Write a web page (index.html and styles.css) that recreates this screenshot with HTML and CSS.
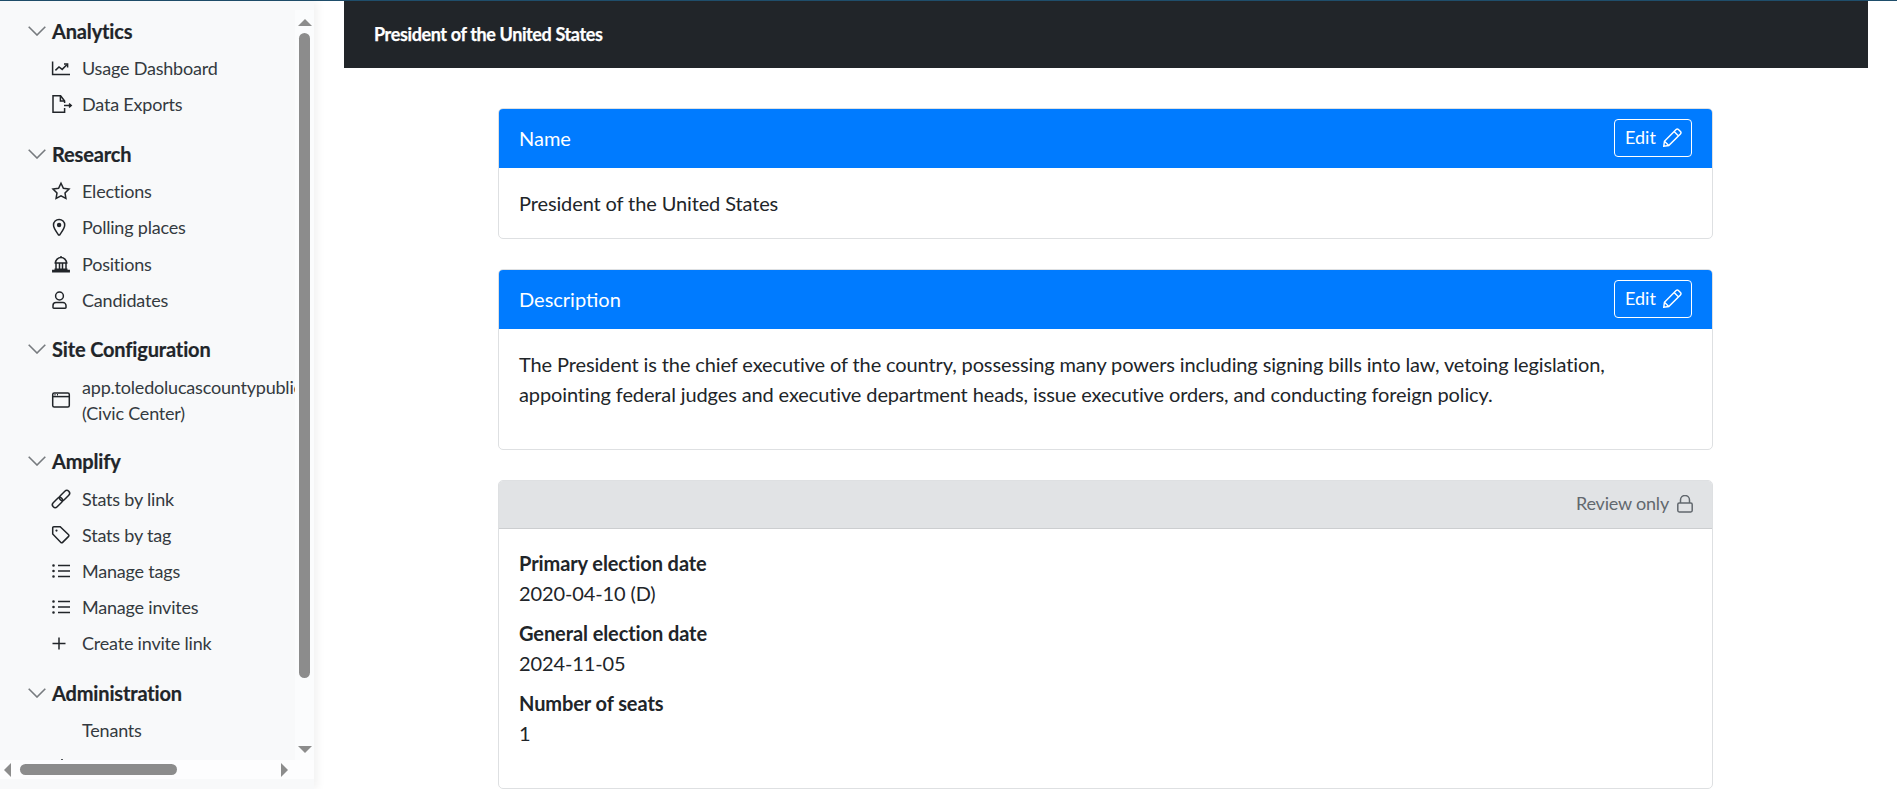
FILE: index.html
```
<!DOCTYPE html>
<html lang="en">
<head>
<meta charset="utf-8">
<title>President of the United States</title>
<link rel="stylesheet" href="styles.css">
</head>
<body>
<div class="app">
  <aside class="sidebar">
    <nav class="nav">
      <section class="group">
        <h2 class="group-title"><svg class="chev" viewBox="0 0 18 10"><path d="M.7.7 9 9l8.3-8.3"/></svg>Analytics</h2>
        <a class="item"><svg class="ico" viewBox="0 0 18 18"><path d="M.6 2.600v12.800H18"/><path d="M3.400 11.400 7 8l3.200 2.400 4.600-4.600"/><path d="M12 5h3.600v3.400"/></svg><span>Usage Dashboard</span></a>
        <a class="item"><svg class="ico ico-wide" viewBox="0 0 20 18"><path d="M12.600 8V6L8.600.7H1v16.600h11.600V13"/><path d="M8.400.9V6h4.200"/><path d="M12 10.500h7"/><path d="m17 8.600 2.200 1.900-2.200 1.900"/></svg><span>Data Exports</span></a>
      </section>
      <section class="group">
        <h2 class="group-title"><svg class="chev" viewBox="0 0 18 10"><path d="M.7.7 9 9l8.3-8.3"/></svg>Research</h2>
        <a class="item"><svg class="ico" viewBox="0 0 18 18"><path d="m9 1.200 2.400 5 5.600.8-4 3.900.9 5.500L9 13.800l-4.900 2.600.9-5.500L1 7l5.600-.8z"/></svg><span>Elections</span></a>
        <a class="item"><svg class="ico" viewBox="0 0 18 18"><path d="M7.600 17C5 13.200 2.500 10.200 2.500 7a5.600 5.600 0 0 1 11.200 0c0 3.200-2.500 6.200-5.100 10z" transform="translate(-1 0)"/><circle cx="7.100" cy="7" r="2.200" class="solid"/></svg><span>Polling places</span></a>
        <a class="item"><svg class="ico" viewBox="0 0 18 18"><path d="M9 1v1.500M3.500 8A5.500 5.500 0 0 1 14.500 8zM2.500 8h13M4 8.500v5.500M7.500 8.500v5.500M10.500 8.500v5.500M14 8.500v5.500M2.500 14.200h13M.8 16.800h16.400v-1.200H.8z"/></svg><span>Positions</span></a>
        <a class="item"><svg class="ico" viewBox="0 0 18 18"><circle cx="7.500" cy="5" r="3.900"/><path d="M1 16.400v-1.800a3 3 0 0 1 3-3h7a3 3 0 0 1 3 3v1.800a.8.8 0 0 1-.8.8H1.800a.8.8 0 0 1-.8-.8z"/></svg><span>Candidates</span></a>
      </section>
      <section class="group">
        <h2 class="group-title"><svg class="chev" viewBox="0 0 18 10"><path d="M.7.7 9 9l8.3-8.3"/></svg>Site Configuration</h2>
        <a class="item item-double"><svg class="ico" viewBox="0 0 18 18"><rect x=".7" y="2" width="16.600" height="14" rx="1.500"/><path d="M.7 5.600h16.600"/><path d="M2.500 3.800h1M5 3.800h1"/></svg><span>app.toledolucascountypubliclibrary.org<br>(Civic Center)</span></a>
      </section>
      <section class="group">
        <h2 class="group-title"><svg class="chev" viewBox="0 0 18 10"><path d="M.7.7 9 9l8.300-8.300"/></svg>Amplify</h2>
        <a class="item"><svg class="ico" viewBox="0 0 18 18"><g transform="rotate(-45 9 9)"><rect x="-2" y="6.200" width="12" height="5.600" rx="2.800"/><rect x="8" y="6.200" width="12" height="5.600" rx="2.800"/></g></svg><span>Stats by link</span></a>
        <a class="item"><svg class="ico" viewBox="0 0 18 18"><path d="M.7 1.900v6l8.200 8.500a1.200 1.200 0 0 0 1.700 0l6-6a1.200 1.200 0 0 0 0-1.700L8.200.8H1.800A1.100 1.100 0 0 0 .7 1.900z"/><circle cx="4.500" cy="4.600" r="1.100" class="solid"/></svg><span>Stats by tag</span></a>
        <a class="item"><svg class="ico" viewBox="0 0 18 18"><path d="M6 3.500h12M6 9h12M6 14.500h12"/><path class="dots" d="M1.500 3.500h.01M1.500 9h.01M1.500 14.500h.01"/></svg><span>Manage tags</span></a>
        <a class="item"><svg class="ico" viewBox="0 0 18 18"><path d="M6 3.500h12M6 9h12M6 14.500h12"/><path class="dots" d="M1.500 3.500h.01M1.500 9h.01M1.500 14.500h.01"/></svg><span>Manage invites</span></a>
        <a class="item"><svg class="ico" viewBox="0 0 18 18"><path d="M7 3.500v12M.5 9.500h13"/></svg><span>Create invite link</span></a>
      </section>
      <section class="group">
        <h2 class="group-title"><svg class="chev" viewBox="0 0 18 10"><path d="M.7.7 9 9l8.300-8.300"/></svg>Administration</h2>
        <a class="item"><i class="ico"></i><span>Tenants</span></a>
        <a class="item"><svg class="ico" viewBox="0 0 18 18"><path d="M10 2v2"/></svg></a>
      </section>
    </nav>
    <div class="vbar"><i class="arrow arrow-up"></i><i class="vthumb"></i><i class="arrow arrow-down"></i></div>
    <div class="hbar"><i class="arrow arrow-left"></i><i class="hthumb"></i><i class="arrow arrow-right"></i></div>
  </aside>
  <main class="main">
    <header class="topbar">President of the United States</header>
    <div class="cards">
      <section class="card">
        <div class="card-head"><span>Name</span><button class="edit" type="button">Edit<svg class="pencil" viewBox="0 0 18 18"><path d="M1.300 12.800 11.800 2.300a1.500 1.500 0 0 1 2.100 0l1.800 1.800a1.500 1.500 0 0 1 0 2.100L5.200 16.700l-4.500.6zM10 4l4 4M1.300 12.800l3.900 3.900"/></svg></button></div>
        <div class="card-body"><p>President of the United States</p></div>
      </section>
      <section class="card">
        <div class="card-head"><span>Description</span><button class="edit" type="button">Edit<svg class="pencil" viewBox="0 0 18 18"><path d="M1.300 12.800 11.800 2.300a1.500 1.500 0 0 1 2.100 0l1.800 1.800a1.500 1.500 0 0 1 0 2.100L5.200 16.700l-4.500.6zM10 4l4 4M1.300 12.800l3.900 3.900"/></svg></button></div>
        <div class="card-body body-desc"><p>The President is the chief executive of the country, possessing many powers including signing bills into law, vetoing legislation, appointing federal judges and executive department heads, issue executive orders, and conducting foreign policy.</p></div>
      </section>
      <section class="card">
        <div class="card-head head-review"><span>Review only</span><svg class="lock" viewBox="0 0 16 18"><path d="M3.500 8V5a4.500 4.500 0 0 1 9 0v3"/><rect x=".8" y="8" width="14.400" height="9" rx="1.400"/></svg></div>
        <div class="card-body body-review">
          <div class="field"><strong>Primary election date</strong><span>2020-04-10 (D)</span></div>
          <div class="field"><strong>General election date</strong><span>2024-11-05</span></div>
          <div class="field"><strong>Number of seats</strong><span>1</span></div>
        </div>
      </section>
    </div>
  </main>
</div>
</body>
</html>
```
FILE: styles.css
```
* { box-sizing: border-box; }
html, body { margin: 0; height: 100%; overflow: hidden; }
body {
  font-family: Lato, "Liberation Sans", sans-serif;
  font-size: 20px;
  line-height: 30.6px;
  color: #212529;
  background: #fff;
}
.app {
  display: flex;
  height: 789px;
  border-top: 1px solid #1f4e6b;
}
.sidebar {
  flex: 0 0 314px;
  display: grid;
  grid-template-columns: 295px 19px;
  grid-template-rows: 750px 19px 1fr;
  padding-top: 9px;
  height: 788px;
  background: #f8f9fa;
  box-shadow: 4px 0 8px rgba(0, 0, 0, .05);
}
.nav { overflow: hidden; }
.group { padding-bottom: 10.7px; }
.group-title {
  display: flex;
  align-items: center;
  gap: 6px;
  height: 40px;
  margin: 0;
  padding: 1px 0 0 28px;
  font-size: 20px;
  font-weight: 700;
  line-height: 1;
  letter-spacing: -.15px;
  -webkit-text-stroke: .2px #212529;
}
.chev { width: 18px; height: 10px; fill: none; stroke: #777b7f; stroke-width: 1.6; }
.item {
  display: flex;
  align-items: center;
  gap: 12px;
  min-height: 36.2px;
  padding: 5px 0 5px 52px;
  font-size: 18px;
  line-height: 26px;
  white-space: nowrap;
  color: #343a40;
  letter-spacing: -.2px;
}
.item-double { min-height: 0; padding: 5px 0 4.4px 52px; }
.ico { flex: 0 0 18px; width: 18px; height: 18px; fill: none; stroke: #212529; stroke-width: 1.5; overflow: visible; }
.ico-wide { width: 20px; margin-right: -2px; flex-basis: 20px; height: 18px; }
.ico .solid { fill: #212529; stroke: none; }
.ico .dots { stroke-width: 2.6; stroke-linecap: round; }
.vbar { position: relative; background: #fbfcfd; }
.vthumb { position: absolute; left: 4px; top: 23px; width: 11px; height: 645px; border-radius: 6px; background: #8c8c8c; }
.hbar { grid-column: 1 / 3; position: relative; background: #fdfdfe; }
.hthumb { position: absolute; left: 20px; top: 4px; width: 157px; height: 11px; border-radius: 6px; background: #8c8c8c; }
.arrow { position: absolute; width: 0; height: 0; border-style: solid; border-color: transparent; }
.arrow-up { left: 3px; top: 9px; border-width: 0 7px 7px; border-bottom-color: #8c8c8c; }
.arrow-down { left: 3px; bottom: 7px; border-width: 7px 7px 0; border-top-color: #8c8c8c; }
.arrow-left { left: 4px; top: 3px; border-width: 7px 7px 7px 0; border-right-color: #8c8c8c; }
.arrow-right { left: 281px; top: 3px; border-width: 7px 0 7px 7px; border-left-color: #8c8c8c; }
.main { flex: 1; min-width: 0; padding: 0 29px 0 30px; }
.topbar {
  height: 67px;
  padding: 0 30px;
  display: flex;
  align-items: center;
  background: #212529;
  color: #fff;
  font-size: 18px;
  font-weight: 700;
  letter-spacing: -.38px;
  -webkit-text-stroke: .25px #fff;
}
.cards { width: 1215px; margin: 40px 0 0 154px; display: flex; flex-direction: column; gap: 30px; }
.card { border: 1px solid #dee0e2; border-radius: 5px; overflow: hidden; }
.card-head {
  display: flex;
  align-items: center;
  justify-content: space-between;
  height: 59px;
  padding: 0 20px;
  background: #007bff;
  color: #fff;
}
.edit {
  display: flex;
  align-items: center;
  gap: 7px;
  width: 78px;
  height: 38px;
  margin-bottom: 1px;
  padding: 0 10px 2px;
  border: 1px solid #fff;
  border-radius: 4px;
  background: transparent;
  color: #fff;
  font-family: inherit;
  font-size: 18px;
  line-height: 1;
}
.pencil { flex: 0 0 20px; width: 20px; height: 20px; fill: none; stroke: #fff; stroke-width: 1.3; }
.card-body { padding: 19.7px 20px; letter-spacing: -.12px; }
.card-body p { margin: 0; }
.body-desc { padding-bottom: 39.4px; }
.head-review {
  height: 48px;
  justify-content: flex-end;
  gap: 8px;
  padding: 0 19px 2px 20px;
  background: #e1e3e5;
  border-bottom: 1px solid #ccced0;
  color: #62686e;
  font-size: 18px;
  letter-spacing: -.2px;
}
.lock { width: 16px; height: 18px; fill: none; stroke: #62686e; stroke-width: 1.5; }
.body-review { padding-top: 18.7px; padding-bottom: 29.7px; }
.field { display: flex; flex-direction: column; margin-bottom: 10px; }
.field span { margin-top: -1px; }
.field strong { font-weight: 700; letter-spacing: -.09px; }
```
